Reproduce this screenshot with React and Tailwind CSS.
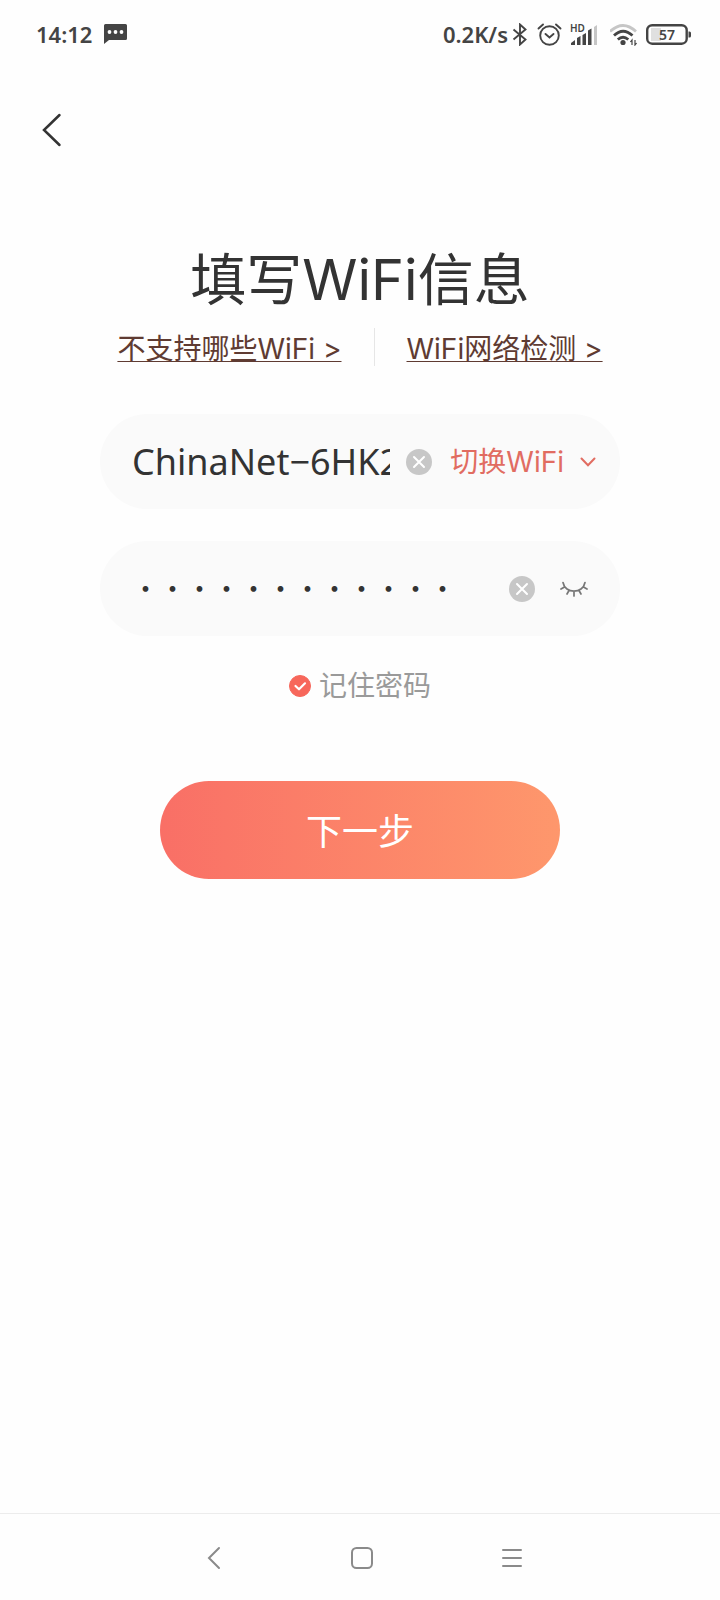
import { useState } from "react";

function StatusBar() {
  return (
    <header className="flex h-[68px] items-center justify-between pr-7 pl-9 font-[family-name:'Noto_Sans','Noto_Sans_CJK_SC',sans-serif] text-[22px] font-semibold text-[#444444]">
      <div className="flex items-center gap-3">
        <span>14:12</span>
        <svg width="23" height="20" viewBox="0 0 23 20" fill="#444444" aria-hidden="true">
          <path d="M1.500 0h20A1.500 1.500 0 0 1 23 1.500v13a1.500 1.500 0 0 1-1.500 1.500H5L0 20V1.500A1.500 1.500 0 0 1 1.500 0z" />
          <circle cx="5.500" cy="8" r="1.900" fill="#fff" />
          <circle cx="11.500" cy="8" r="1.900" fill="#fff" />
          <circle cx="17.500" cy="8" r="1.900" fill="#fff" />
        </svg>
      </div>
      <div className="flex items-center">
        <span className="mr-1">0.2K/s</span>
        <svg className="mr-2" width="17" height="23" viewBox="0 0 17 23" fill="none" stroke="#444444" strokeWidth="1.900" aria-hidden="true">
          <path d="M1.500 6.500l12 10-5.500 5V1.500l5.500 5-12 10" />
        </svg>
        <svg className="mr-2" width="25" height="23" viewBox="-1 0 25 23" fill="none" stroke="#444444" strokeWidth="1.900" strokeLinecap="round" aria-hidden="true">
          <circle cx="11.500" cy="12.500" r="9.300" />
          <path d="M7.500 11l4 3.500 4-3.500M0.500 5.500l4.500-4M22.500 5.500l-4.500-4" />
        </svg>
        <svg className="mr-3 overflow-visible" width="28" height="23" viewBox="0 0 28 23" aria-hidden="true">
          <text x="0" y="9" fontSize="10" fontWeight="600" fill="#444444">HD</text>
          <path d="M1 22v-2l4-3v5zM7 22v-7l3.500-2v9zM12.500 22V12l3.500-2v12zM18 22V7.500l3.500-2V22z" fill="#444444" />
          <path d="M24 22V4l3-2v20z" fill="#c6c6c6" />
        </svg>
        <svg className="mr-2" width="28" height="23" viewBox="0 0 28 23" fill="none" strokeWidth="2.800" aria-hidden="true">
          <path d="M0 8.500Q13 -3.500 26 8.500" stroke="#c6c6c6" />
          <path d="M4 12.500Q13 4 22.500 12.500M7.800 16.500Q13 12 18.300 16.500" stroke="#444444" />
          <circle cx="13" cy="19.500" r="2.600" fill="#444444" />
          <path d="M22 22v-5l-1.600 2M25 17v5l1.600-2" stroke="#444444" strokeWidth="1.200" />
        </svg>
        <svg width="46" height="21" viewBox="0 0 46 21" aria-hidden="true">
          <rect x="5" y="4" width="10" height="13" fill="#e0e0e0" />
          <rect x="1.200" y="1.200" width="39.500" height="18.500" rx="5" fill="none" stroke="#444444" strokeWidth="2.400" />
          <path d="M42.500 7.500h1q1.500 0 1.500 1.500v3q0 1.500-1.500 1.500h-1z" fill="#444444" />
          <text x="21" y="15.500" textAnchor="middle" fontSize="14" fontWeight="600" fill="#444444">57</text>
        </svg>
      </div>
    </header>
  );
}

function ClearButton({ label, onClick }) {
  return (
    <button type="button" aria-label={label} onClick={onClick} className="shrink-0">
      <svg width="26" height="26" viewBox="0 0 26 26" aria-hidden="true">
        <circle cx="13" cy="13" r="13" fill="#c7c7c7" />
        <path d="M8 8l10 10M18 8L8 18" stroke="#fff" strokeWidth="2" strokeLinecap="round" />
      </svg>
    </button>
  );
}

export default function App() {
  const [network, setNetwork] = useState("ChinaNet−6HK2");
  const [password, setPassword] = useState("123456789012");
  const [visible, setVisible] = useState(false);
  const [remember, setRemember] = useState(true);

  return (
    <div className="flex min-h-screen flex-col bg-[#fefefe] font-[family-name:'Inter','Noto_Sans_CJK_SC',sans-serif] text-[#333333]">
      <StatusBar />
      <nav className="flex h-[124px] items-center px-10">
        <button type="button" aria-label="返回">
          <svg width="24" height="34" viewBox="0 0 24 34" fill="none" stroke="#333333" strokeWidth="2.500" strokeLinecap="round" aria-hidden="true">
            <path d="M19.500 2L4 17l15.500 15" />
          </svg>
        </button>
      </nav>

      <main className="flex flex-1 flex-col items-center pt-[46px]">
        <h1 className="text-[56px] leading-[84px]">填写WiFi信息</h1>

        <div className="mt-[6px] flex h-[38px] items-center gap-8 text-[28px] leading-[38px] text-[#5f3b32]">
          <a href="#unsupported" className="pt-1 underline decoration-1 underline-offset-2 [text-decoration-skip-ink:none]">
            不支持哪些WiFi &gt;
          </a>
          <span className="h-full w-px bg-[#e6e6e6]" />
          <a href="#check" className="pt-1 underline decoration-1 underline-offset-2 [text-decoration-skip-ink:none]">
            WiFi网络检测 &gt;
          </a>
        </div>

        <form className="flex w-full flex-col items-center" onSubmit={(e) => e.preventDefault()}>
          <div className="mt-12 flex h-[95px] w-13/18 items-center rounded-full bg-[#fafafa] pr-6 pl-8">
            <input
              type="text"
              aria-label="WiFi名称"
              value={network}
              onChange={(e) => setNetwork(e.target.value)}
              className="mr-4 min-w-0 flex-1 bg-transparent font-[family-name:'Noto_Sans','Noto_Sans_CJK_SC',sans-serif] text-[36px] outline-none"
            />
            <ClearButton label="清除WiFi名称" onClick={() => setNetwork("")} />
            <button type="button" className="ml-[18px] flex shrink-0 items-center gap-4 text-[28px] text-[#e16c61]">
              切换WiFi
              <svg width="16" height="10" viewBox="0 0 16 10" fill="none" stroke="#e16c61" strokeWidth="2" strokeLinecap="round" aria-hidden="true">
                <path d="M1.500 1.500L8 8.200l6.500-6.700" />
              </svg>
            </button>
          </div>

          <div className="mt-8 flex h-[95px] w-13/18 items-center rounded-full bg-[#fafafa] pr-8 pl-8">
            <input
              type={visible ? "text" : "password"}
              aria-label="WiFi密码"
              value={password}
              onChange={(e) => setPassword(e.target.value)}
              className="mr-4 min-w-0 flex-1 bg-transparent font-[family-name:'Noto_Sans_CJK_SC',sans-serif] text-[27px] outline-none"
            />
            <ClearButton label="清除密码" onClick={() => setPassword("")} />
            <button type="button" aria-label="显示密码" className="ml-[25px] shrink-0" onClick={() => setVisible(!visible)}>
              <svg width="28" height="16" viewBox="0 0 28 16" fill="none" stroke="#777777" strokeWidth="1.700" strokeLinecap="round" aria-hidden="true">
                <path d="M3 1.500C5 13 23 13 25 1.500M4.500 6L1 8M23.500 6L27 8M9 9.500l-2 3.500M19 9.500l2 3.500M14 10.500V15" />
              </svg>
            </button>
          </div>

          <label className="mt-8 flex h-9 items-center gap-2 text-[28px] leading-9 text-[#9a9a9a]">
            <span className="relative flex">
              <input
                type="checkbox"
                checked={remember}
                onChange={(e) => setRemember(e.target.checked)}
                className="size-[22px] appearance-none rounded-full border border-[#c7c7c7] checked:border-[#f7675b] checked:bg-[#f7675b]"
              />
              <svg className="pointer-events-none absolute inset-0" width="22" height="22" viewBox="0 0 22 22" fill="none" stroke="#fff" strokeWidth="2.200" strokeLinecap="round" strokeLinejoin="round" aria-hidden="true">
                <path d="M6.500 11l3.500 3.300 6-6" />
              </svg>
            </span>
            记住密码
          </label>

          <button
            type="submit"
            className="mt-[77px] h-[98px] w-5/9 rounded-full bg-linear-to-r from-[#f96f66] to-[#fe976c] pt-1 text-[36px] text-white"
          >
            下一步
          </button>
        </form>
      </main>

      <footer className="flex h-[87px] items-center justify-center gap-[126px] border-t border-[#ececec] pt-[2px] pl-1">
        <button type="button" aria-label="后退">
          <svg width="24" height="24" viewBox="0 0 24 24" fill="none" stroke="#8a8a8a" strokeWidth="2" strokeLinecap="round" aria-hidden="true">
            <path d="M19 2L9 12l10 10" />
          </svg>
        </button>
        <button type="button" aria-label="主页">
          <svg width="24" height="24" viewBox="0 0 24 24" fill="none" stroke="#8a8a8a" strokeWidth="2" aria-hidden="true">
            <rect x="2" y="2" width="20" height="20" rx="4.500" />
          </svg>
        </button>
        <button type="button" aria-label="最近任务">
          <svg width="24" height="24" viewBox="0 0 24 24" fill="none" stroke="#8a8a8a" strokeWidth="2" strokeLinecap="round" aria-hidden="true">
            <path d="M3 4h18M3 12h18M3 20h18" />
          </svg>
        </button>
      </footer>
    </div>
  );
}
